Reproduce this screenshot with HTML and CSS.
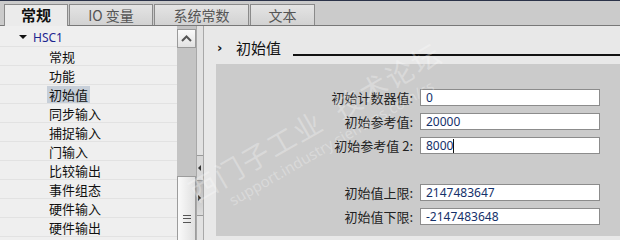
FILE: index.html
```html
<!DOCTYPE html>
<html>
<head>
    <title>HSC1 - 初始值</title>
    <link rel="stylesheet" href="styles.css">
</head>
<body>
    <div class="topline"></div>
    <div class="tabbar">
        <div class="tab active">常规</div>
        <div class="tab io">IO 变量</div>
        <div class="tab sys">系统常数</div>
        <div class="tab txt">文本</div>
    </div>

    <div class="main">
        <div class="tree">
            <div class="row root"><span class="caret"></span><span class="hsc">HSC1</span></div>
            <div class="row"><span class="item">常规</span></div>
            <div class="row"><span class="item">功能</span></div>
            <div class="row"><span class="item selected">初始值</span></div>
            <div class="row"><span class="item">同步输入</span></div>
            <div class="row"><span class="item">捕捉输入</span></div>
            <div class="row"><span class="item">门输入</span></div>
            <div class="row"><span class="item">比较输出</span></div>
            <div class="row"><span class="item">事件组态</span></div>
            <div class="row"><span class="item">硬件输入</span></div>
            <div class="row"><span class="item">硬件输出</span></div>
        </div>

        <div class="vscroll">
            <div class="scroll-up">
                <svg width="11" height="7" viewBox="0 0 11 7"><path d="M1 6 L5.5 1.5 L10 6" fill="none" stroke="#555" stroke-width="2"/></svg>
            </div>
            <div class="scroll-track"></div>
            <div class="scroll-thumb">
                <div class="grip"></div>
            </div>
        </div>

        <div class="splitter">
            <div class="split-top"></div>
            <div class="split-btn"><span class="arr-left"></span></div>
            <div class="split-btn dark"><span class="arr-right"></span></div>
            <div class="split-rest"></div>
        </div>

        <div class="editor">
            <div class="section-head">
                <span class="chev">›</span>
                <span class="section-title">初始值</span>
                <span class="section-line"></span>
            </div>
            <div class="panel">
                <div class="form">
                    <div class="field">
                        <label>初始计数器值:</label>
                        <div class="input">0</div>
                    </div>
                    <div class="field">
                        <label>初始参考值:</label>
                        <div class="input">20000</div>
                    </div>
                    <div class="field">
                        <label>初始参考值 2:</label>
                        <div class="input">8000<span class="cursor"></span></div>
                    </div>
                    <div class="field gap">
                        <label>初始值上限:</label>
                        <div class="input">2147483647</div>
                    </div>
                    <div class="field">
                        <label>初始值下限:</label>
                        <div class="input">-2147483648</div>
                    </div>
                </div>
            </div>
            <div class="panel-foot"></div>
        </div>
    </div>

    <!-- forum watermark over the screenshot -->
    <div class="watermark">
        <div class="wm-big">西门子工业&nbsp;&nbsp;技术论坛</div>
        <div class="wm-small">support.industry.siemens.com/cs</div>
    </div>
</body>
</html>
```

FILE: styles.css
```css
body {
    margin: 0;
    width: 620px;
    height: 240px;
    overflow: hidden;
    position: relative;
    font-family: "Noto Sans", "Noto Sans CJK SC", sans-serif;
    font-size: 13px;
    color: #222;
    background: #e8e8e8;
}
.topline {
    height: 1px;
    background: #2b3349;
}
.tabbar {
    height: 24px;
    background: #cbcbcb;
    border-bottom: 1px solid #787878;
    display: flex;
    align-items: flex-end;
    padding-left: 4px;
    gap: 1px;
}
.tab {
    height: 20px;
    border: 1px solid #8a8a8a;
    border-bottom: none;
    background: linear-gradient(#e4e4e4, #d2d2d2);
    color: #555;
    font-family: "Noto Sans CJK SC", sans-serif;
    font-size: 14px;
    line-height: 20px;
    text-align: center;
}
.tab.active {
    width: 62px;
    height: 21px;
    margin-bottom: -1px;
    background: #ebebeb;
    color: #111;
    font-weight: bold;
    font-size: 15px;
}
.tab.io { width: 82px; }
.tab.sys { width: 93px; }
.tab.txt { width: 63px; }

.main {
    display: flex;
    height: 214px;
}
.tree {
    width: 177px;
    background: #efefef;
    padding-top: 2px;
}
.row {
    height: 18px;
    border-bottom: 1px solid #e2e2e2;
    display: flex;
    align-items: center;
    padding-left: 47px;
    font-family: "Noto Sans CJK SC", sans-serif;
    font-size: 13px;
    color: #111;
}
.row.root {
    padding-left: 19px;
}
.caret {
    width: 0;
    height: 0;
    border-left: 4px solid transparent;
    border-right: 4px solid transparent;
    border-top: 4px solid #111;
    margin-right: 6px;
}
.hsc {
    font-family: "Noto Sans", sans-serif;
    font-size: 12px;
    color: #1c2590;
}
.item {
    padding: 0 2px;
    line-height: 17px;
}
.item.selected {
    background: #c7cfd9;
}

.vscroll {
    width: 19px;
    display: flex;
    flex-direction: column;
    background: #c4c4c4;
}
.scroll-up {
    height: 17px;
    margin-top: 3px;
    border: 1px solid #9a9a9a;
    background: linear-gradient(#fafafa, #e2e2e2);
    display: flex;
    align-items: center;
    justify-content: center;
}
.scroll-track {
    flex: 1;
}
.scroll-thumb {
    height: 64px;
    border: 1px solid #9c9c9c;
    border-bottom: none;
    background: linear-gradient(90deg, #fafafa, #e0e0e0);
    display: flex;
    justify-content: center;
    padding-top: 38px;
    box-sizing: border-box;
}
.grip {
    width: 8px;
    height: 6px;
    border-top: 1px solid #555;
    border-bottom: 1px solid #555;
    position: relative;
}
.grip::after {
    content: "";
    position: absolute;
    left: 0;
    right: 0;
    top: 2px;
    border-top: 1px solid #555;
}

.splitter {
    width: 6px;
    border-left: 1px solid #a8a8a8;
    border-right: 1px solid #a8a8a8;
    background: #e2e2e2;
    display: flex;
    flex-direction: column;
}
.split-top {
    height: 129px;
}
.split-btn {
    height: 24px;
    border-top: 1px solid #9a9a9a;
    background: #d8d8d8;
    display: flex;
    align-items: center;
}
.split-btn.dark {
    height: 34px;
    border-bottom: 1px solid #9a9a9a;
    background: linear-gradient(#b8b8b8, #dcdcdc);
}
.split-rest {
    flex: 1;
}
.arr-left {
    width: 0;
    height: 0;
    border-top: 3px solid transparent;
    border-bottom: 3px solid transparent;
    border-right: 3px solid #333;
    margin-left: 1px;
}
.arr-right {
    width: 0;
    height: 0;
    border-top: 3px solid transparent;
    border-bottom: 3px solid transparent;
    border-left: 3px solid #111;
    margin-left: 1px;
}

.editor {
    flex: 1;
    display: flex;
    flex-direction: column;
    background: #e8e8e8;
}
.section-head {
    height: 38px;
    display: flex;
    align-items: center;
    padding-left: 13px;
    box-sizing: border-box;
    padding-top: 4px;
}
.chev {
    font-family: "DejaVu Sans", sans-serif;
    font-size: 13px;
    font-weight: bold;
    width: 19px;
    color: #111;
}
.section-title {
    font-family: "Noto Sans CJK SC", sans-serif;
    font-size: 15px;
    color: #111;
}
.section-line {
    flex: 1;
    align-self: flex-end;
    height: 2px;
    background: #111;
    margin-left: 12px;
    margin-bottom: 8px;
}
.panel {
    margin-left: 12px;
    height: 172px;
    background: #cbcbcb;
}
.panel-foot {
    flex: 1;
}
.form {
    padding-top: 25px;
    display: flex;
    flex-direction: column;
    gap: 7px;
}
.field {
    display: flex;
    align-items: center;
    height: 17px;
}
.field.gap {
    margin-top: 23px;
}
.field label {
    width: 197px;
    text-align: right;
    padding-right: 7px;
    font-family: "Noto Sans CJK SC", sans-serif;
    font-size: 13px;
    color: #222;
}
.input {
    width: 173px;
    height: 15px;
    border: 1px solid #8c8c8c;
    background: #fff;
    padding-left: 5px;
    font-family: "Noto Sans", sans-serif;
    font-size: 12px;
    line-height: 15px;
    color: #14306a;
    display: flex;
    align-items: center;
}
.cursor {
    width: 1px;
    height: 14px;
    background: #111;
}

.watermark {
    position: absolute;
    left: 182px;
    top: 178px;
    transform: rotate(-30deg);
    transform-origin: left top;
    color: rgba(255, 255, 255, 0.28);
    pointer-events: none;
}
.wm-big {
    font-family: "Noto Sans CJK SC", sans-serif;
    font-size: 28px;
    line-height: 34px;
    letter-spacing: 2px;
}
.wm-small {
    font-family: "Noto Sans", sans-serif;
    font-size: 15px;
    padding-left: 30px;
}
```
